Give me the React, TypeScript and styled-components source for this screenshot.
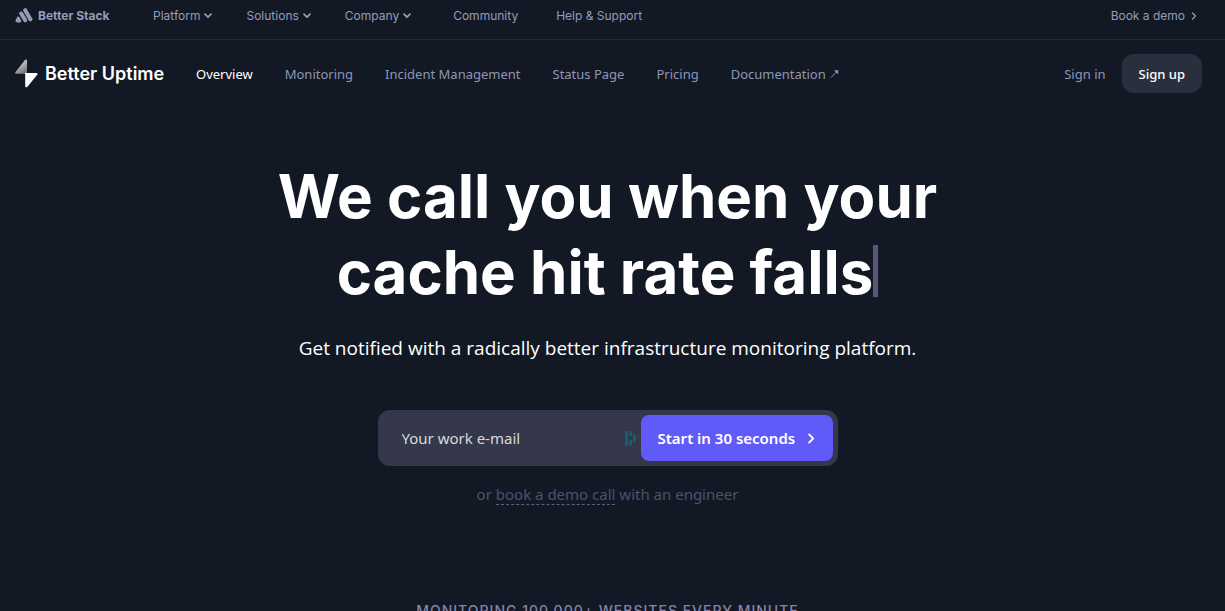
import React from "react";
import styled, { createGlobalStyle } from "styled-components";

const display = `Inter, "Liberation Sans", sans-serif`;
const body = `"Noto Sans", "Open Sans", sans-serif`;

const GlobalStyle = createGlobalStyle`
  * { box-sizing: border-box; }
  body { margin: 0; background: #131825; color: #fff; font-family: ${body}; }
  a { color: inherit; text-decoration: none; }
  button, input { font: inherit; color: inherit; border: 0; }
  button { cursor: pointer; }
`;

const Page = styled.div`
  height: 100vh;
  overflow: hidden;
`;

const TopBar = styled.header`
  display: flex;
  align-items: center;
  height: 40px;
  padding: 0 28px 8px 15px;
  border-bottom: 1px solid #232938;
  color: #939db8;
  font-family: ${display};
  font-size: 12px;
  line-height: 16px;
`;

const StackBrand = styled.a`
  display: flex;
  align-items: center;
  gap: 5px;
  width: 138px;
  font-weight: 700;
`;

const TopNav = styled.nav`
  display: flex;
  flex: 1;
  gap: 34px;
`;

const MenuButton = styled.button`
  display: flex;
  align-items: center;
  gap: 4px;
  padding: 0;
  background: none;
`;

const TopLink = styled.a<{ $lead?: boolean }>`
  display: flex;
  align-items: center;
  gap: 6px;
  margin-left: ${(p) => (p.$lead ? 8 : 4)}px;
`;

const MainBar = styled.header`
  display: flex;
  align-items: center;
  height: 67px;
  padding: 0 23px 0 15px;
  color: #8d97b5;
  font-size: 13px;
  line-height: 20px;
`;

const UptimeBrand = styled.a`
  display: flex;
  align-items: center;
  gap: 7px;
  width: 181px;
  color: #fff;
  font-family: ${display};
  font-size: 18px;
  font-weight: 600;
  line-height: 24px;
`;

const MainNav = styled.nav`
  display: flex;
  flex: 1;
  gap: 32px;
`;

const MainLink = styled.a<{ $active?: boolean }>`
  display: flex;
  align-items: center;
  gap: 4px;
  color: ${(p) => (p.$active ? "#fff" : "inherit")};
`;

const SignUp = styled.button`
  height: 39px;
  margin-left: 16px;
  padding: 0 17px;
  border-radius: 12px;
  background: #2a2f3e;
  color: #fff;
  font-weight: 500;
`;

const Hero = styled.main`
  display: flex;
  flex-direction: column;
  align-items: center;
  padding: 51px 10px 0 0;
  text-align: center;
`;

const Title = styled.h1`
  margin: 0;
  font-family: ${display};
  font-size: 60px;
  font-weight: 700;
  line-height: 76px;
`;

const Caret = styled.span`
  display: inline-block;
  width: 5px;
  height: 52px;
  background: #595778;
  vertical-align: -3px;
`;

const Lead = styled.p`
  margin: 24px 0 0;
  font-family: "Open Sans", "Noto Sans", sans-serif;
  font-size: 19px;
  line-height: 28px;
`;

const SignupForm = styled.form`
  display: flex;
  align-items: center;
  width: 460px;
  max-width: 100%;
  height: 56px;
  margin-top: 48px;
  padding: 5px;
  border-radius: 12px;
  background: #34384a;
`;

const EmailInput = styled.input`
  flex: 1;
  min-width: 0;
  height: 100%;
  padding: 0 0 0 19px;
  outline: 0;
  background: none;
  font-size: 15px;
  &::placeholder { color: #d9dadd; opacity: 1; }
`;

const SubmitButton = styled.button`
  display: flex;
  align-items: center;
  justify-content: space-between;
  width: 192px;
  height: 46px;
  margin-left: 4px;
  padding: 0 17px;
  border-radius: 8px;
  background: #5f5af8;
  font-size: 15px;
  font-weight: 600;
  white-space: nowrap;
`;

const DemoNote = styled.p`
  margin: 17px 0 0;
  color: #514f6d;
  font-size: 15px;
  line-height: 22px;
`;

const DemoLink = styled.a`
  display: inline-block;
  border-bottom: 1px dashed #625f82;
  line-height: 20px;
`;

const Customers = styled.h2`
  margin: 96px 0 0;
  color: #8682a8;
  font-family: ${display};
  font-size: 14px;
  font-weight: 500;
  letter-spacing: 1px;
  line-height: 20px;
  text-transform: uppercase;
`;

const StackLogo = () => (
  <svg width="18" height="15" viewBox="0 0 18 15" fill="none" stroke="#939db8" strokeLinecap="round" strokeLinejoin="round" aria-hidden="true">
    <path d="M10.200 2.200 15.400 11.300" strokeWidth="4" />
    <path d="M6.200 5.500 10.200 12.300" strokeWidth="4" />
    <path d="M2.800 9.800 1.500 12.700Q1.500 13.500 2.300 13.500H5Q5.500 13.500 5.200 12.800L3.700 9.900Q3.200 9.200 2.800 9.800Z" strokeWidth="2" fill="#939db8" />
  </svg>
);

const UptimeLogo = () => (
  <svg width="23" height="29" viewBox="0 0 23 29" aria-hidden="true">
    <defs>
      <linearGradient id="bolt" x1="0" y1="0" x2=".5" y2="1">
        <stop offset="0" stopColor="#e4e5e8" />
        <stop offset=".5" stopColor="#b4b6bb" />
        <stop offset="1" stopColor="#777b84" />
      </linearGradient>
    </defs>
    <path d="M.3 13.300 10.200.7Q12 0 12 1.300V14.700H1Q-.3 14.500.3 13.300Z" fill="url(#bolt)" />
    <path d="M10.200 14h11.300q1.400.2.900 1.400l-9.900 12.300q-2 1.200-2.300-.4Z" fill="#fff" />
  </svg>
);

const ChevronDown = () => (
  <svg width="8" height="6" viewBox="0 0 8 6" fill="none" stroke="currentColor" strokeWidth="1.700" strokeLinecap="round" strokeLinejoin="round" aria-hidden="true">
    <path d="m1 1.200 3 3 3-3" />
  </svg>
);

const ChevronRight = ({ size = 8 }: { size?: number }) => (
  <svg width={size * 0.75} height={size} viewBox="0 0 6 8" fill="none" stroke="currentColor" strokeWidth="1.300" strokeLinecap="round" strokeLinejoin="round" aria-hidden="true">
    <path d="m1.500 1 3 3-3 3" />
  </svg>
);

const ArrowOut = () => (
  <svg width="9" height="9" viewBox="0 0 9 9" fill="none" stroke="currentColor" aria-hidden="true">
    <path d="M1 8.500 7.500 2" />
    <path d="M4 1.200h4.200V5.400Z" fill="currentColor" stroke="none" />
  </svg>
);

const FieldMark = () => (
  <svg width="12" height="15" viewBox="0 0 12 15" fill="#0a6378" aria-hidden="true">
    <path d="M0 0h2l1 1v14H1l-1-1ZM4 0h2l1 1v4H5L4 4ZM8 4h2l1 1v5l-1 1H8ZM4 10l1-1h2v4l-1 2H4Z" />
  </svg>
);

export default function App() {
  return (
    <Page>
      <GlobalStyle />
      <TopBar>
        <StackBrand href="#"><StackLogo />Better Stack</StackBrand>
        <TopNav aria-label="Company">
          <MenuButton type="button">Platform<ChevronDown /></MenuButton>
          <MenuButton type="button">Solutions<ChevronDown /></MenuButton>
          <MenuButton type="button">Company<ChevronDown /></MenuButton>
          <TopLink href="#" $lead>Community</TopLink>
          <TopLink href="#">Help &amp; Support</TopLink>
        </TopNav>
        <TopLink href="#">Book a demo<ChevronRight /></TopLink>
      </TopBar>
      <MainBar>
        <UptimeBrand href="#"><UptimeLogo />Better Uptime</UptimeBrand>
        <MainNav aria-label="Product">
          <MainLink href="#" $active>Overview</MainLink>
          <MainLink href="#">Monitoring</MainLink>
          <MainLink href="#">Incident Management</MainLink>
          <MainLink href="#">Status Page</MainLink>
          <MainLink href="#">Pricing</MainLink>
          <MainLink href="#">Documentation<ArrowOut /></MainLink>
        </MainNav>
        <MainLink href="#">Sign in</MainLink>
        <SignUp type="button">Sign up</SignUp>
      </MainBar>
      <Hero>
        <Title>We call you when your<br />cache hit rate falls<Caret /></Title>
        <Lead>Get notified with a radically better infrastructure monitoring platform.</Lead>
        <SignupForm onSubmit={(e: React.FormEvent) => e.preventDefault()}>
          <EmailInput type="email" placeholder="Your work e-mail" aria-label="Your work e-mail" />
          <FieldMark />
          <SubmitButton type="submit">Start in 30 seconds<ChevronRight size={11} /></SubmitButton>
        </SignupForm>
        <DemoNote>or <DemoLink href="#">book a demo call</DemoLink> with an engineer</DemoNote>
        <Customers>Monitoring 100,000+ websites every minute</Customers>
      </Hero>
    </Page>
  );
}
